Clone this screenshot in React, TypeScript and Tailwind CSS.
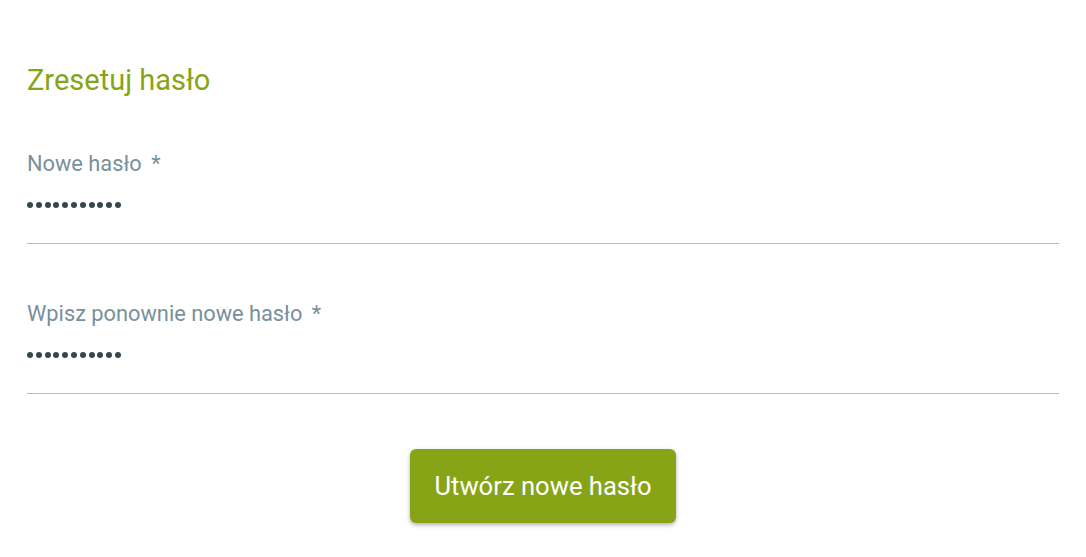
function Dots() {
  return (
    <div className="flex h-[6px] gap-[2.8px]">
      {Array.from({ length: 11 }).map((_, i) => (
        <span key={i} className="h-[6px] w-[6px] rounded-full bg-[#37474f]" />
      ))}
    </div>
  );
}

function PasswordField({ label }: { label: string }) {
  return (
    <div>
      <label className="block text-[21.8px] leading-[26px] text-[#78909c]">
        {label} <span className="ml-[4px]">*</span>
      </label>
      <div className="border-b border-[#b0bec5] pb-[35px] pt-[25px]">
        <Dots />
      </div>
    </div>
  );
}

export default function App() {
  return (
    <div className="min-h-screen bg-white px-[27px] pt-[63px]" style={{ fontFamily: "Roboto, 'Liberation Sans', sans-serif" }}>
      <h1 className="text-[29px] leading-[34px] text-[#87a417]">Zresetuj hasło</h1>

      <div className="mt-[54px]">
        <PasswordField label="Nowe hasło" />
      </div>

      <div className="mt-[57px]">
        <PasswordField label="Wpisz ponownie nowe hasło" />
      </div>

      <div className="mt-[55px] flex justify-center">
        <button className="h-[74px] w-[266px] rounded-[6px] bg-[#87a417] text-[25.6px] text-white shadow-[0_2px_4px_rgba(0,0,0,0.3)]">
          Utwórz nowe hasło
        </button>
      </div>
    </div>
  );
}
